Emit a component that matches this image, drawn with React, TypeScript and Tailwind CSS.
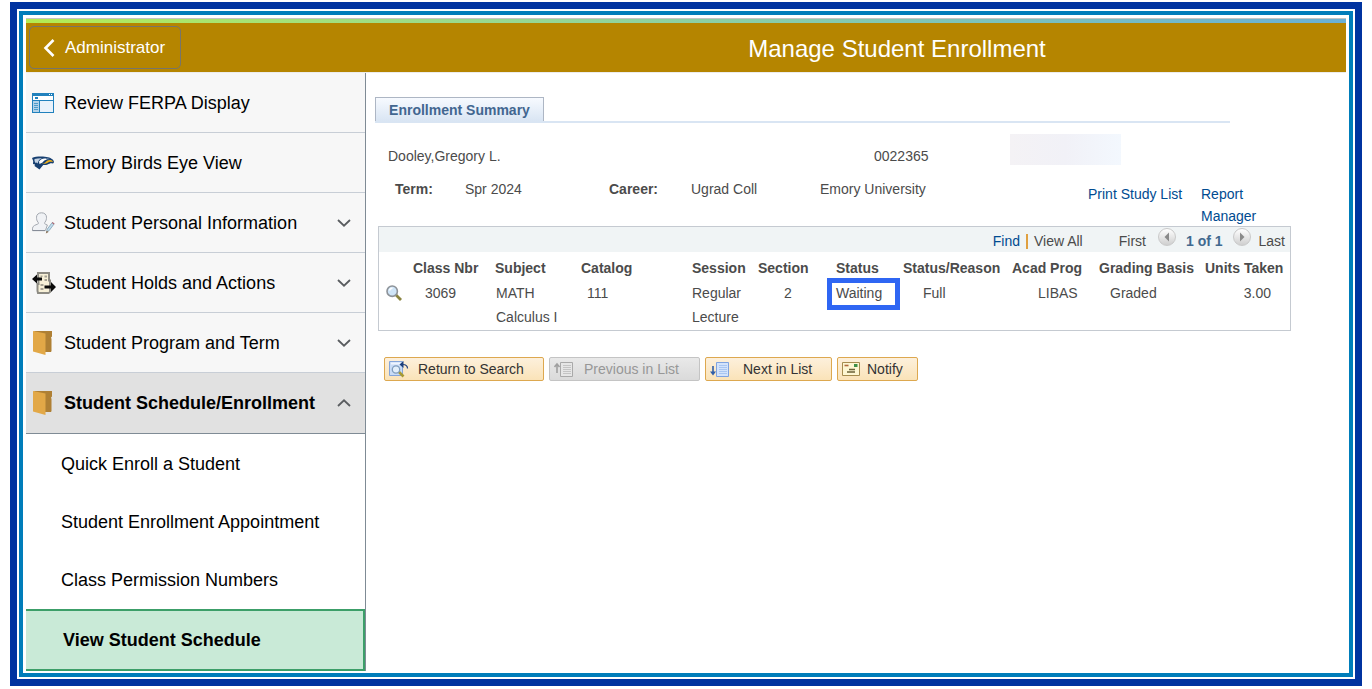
import React from "react";

const ink = "#4b4b4b";

function PageIcon() {
  return (
    <svg width="22" height="20" viewBox="0 0 22 20" shapeRendering="crispEdges" aria-hidden="true">
      <rect width="22" height="20" fill="#2181bd" />
      <rect x="17" y="1" width="1" height="1" fill="#fff" />
      <rect x="19" y="1" width="1" height="1" fill="#fff" />
      <rect x="1" y="3" width="20" height="4" fill="#fff" />
      <rect x="3" y="4" width="3" height="2" fill="#2181bd" />
      <rect x="1" y="8" width="6" height="11" fill="#b3d2e8" />
      <rect x="8" y="8" width="13" height="11" fill="#e9f2fb" />
      <rect x="2" y="10" width="4" height="1" fill="#4d9bcb" />
      <rect x="2" y="12" width="4" height="1" fill="#4d9bcb" />
      <rect x="2" y="14" width="4" height="1" fill="#4d9bcb" />
      <rect x="2" y="16" width="4" height="1" fill="#4d9bcb" />
    </svg>
  );
}

function EagleIcon() {
  return (
    <svg width="22" height="14" viewBox="0 0 22 14" aria-hidden="true">
      <path d="M0 2C3 .6 8 .2 13 .7c4 .3 7.600 1.800 8.700 4.200.5 1.300.1 2.200-1 2.500-2-.6-3.200.2-5 1-1.500.6-3 .6-4.500.5L7.500 13.600 2.500 10 3 8.500 1 8 1.200 5z" fill="#173f70" />
      <path d="M2.500 3c2.500-.7 5-.9 7.500-.8-1.500.5-2.500 1.200-3.200 2.300L5.500 7.500 4.500 6.500 3.500 7 2.500 5z" fill="#c3d2e3" />
      <path d="M7 5.500C8.500 3 11 2.200 14 2.600l1 .9c-2 .3-3.500 1.500-4.500 3L7.500 8z" fill="#fff" />
      <path d="M9.500 7.600c2 .1 3-.4 4-1.400 1.500-1.600 3-2.400 5-2.100 1.500.2 2.300.9 2.300 1.900-2.600-.7-3.800 0-5.600.9-1.800.9-3.700 1.100-5.700.7z" fill="#ecae1b" />
      <path d="M14 2.200c1.500 0 3 .3 4 .9l-2.500.3z" fill="#7f9ab9" />
    </svg>
  );
}

function PersonIcon() {
  return (
    <svg width="23" height="22" viewBox="0 0 23 22" aria-hidden="true">
      <path d="M.5 18.500v-2.300c.2-2.500 3.200-3.300 5-4 1.300-.4 1.100-1.400.4-2.200C4.800 8.700 4.500 7.200 4.500 5.200 4.500 2.600 6.500.8 9.500.8s5 1.800 5 4.400c0 2-.3 3.500-1.400 4.800-.7.800-.8 1.700.3 2.200l2 .8-2 5.500z" fill="#f0f2f5" stroke="#a3a8b0" />
      <path d="M.5 18.600h12.500" stroke="#858b95" />
      <path d="M14.500 20.300l.8-3.200L20.200 10.500l1.900 1.400-4.900 6.600z" fill="#c2dded" stroke="#7e9fb4" strokeWidth=".8" />
      <path d="M13.800 21.500l.9-2.800 1.800 1.300z" fill="#8b6b4b" />
      <path d="M20.200 10.600l2 1.400" stroke="#b06a72" strokeWidth="1.200" />
    </svg>
  );
}

function TransferIcon() {
  return (
    <svg width="24" height="24" viewBox="0 0 24 24" aria-hidden="true">
      <path d="M6 2h11v7.500h1v11.500l-1.500 1H6l-.5-2v-7h1z" fill="#f7f0d7" stroke="#8d8b83" strokeWidth="2" />
      <path d="M12.500 4.500h2.500v2h-2.500zM12.500 8h2.500v2h-2.500zM8.500 13h3v2h-3zM8.500 17h3v2h-3zM8.500 4.500h2v1.500h-2z" fill="#a5a193" />
      <path d="M0 8l5-4.500V6.500h5v3H5v3z" fill="#0a0a0a" />
      <path d="M24 16l-5-5v3.500h-6.500v3H19v3.500z" fill="#0a0a0a" />
    </svg>
  );
}

function FolderIcon() {
  return (
    <svg width="19" height="24" viewBox="0 0 19 24" className="ml-px" aria-hidden="true">
      <path d="M1 0H19v5.500l-1 1 .5 1.500v12l-.5 1H12z" fill="#af8034" />
      <path d="M0 0l12.500 2.500V24L0 20.500z" fill="#e2a847" />
    </svg>
  );
}

function Chevron({ up = false }: { up?: boolean }) {
  return (
    <svg width="14" height="8" viewBox="0 0 14 8" fill="none" stroke="#5a5d60" strokeWidth="1.800" aria-hidden="true">
      <path d={up ? "M1 7l6-5.700L13 7" : "M1 1l6 5.700L13 1"} />
    </svg>
  );
}

function MagnifierIcon() {
  return (
    <svg width="16" height="16" viewBox="0 0 16 16" aria-hidden="true">
      <path d="M9.800 9.800L15 15" stroke="#8a8440" strokeWidth="2.800" />
      <circle cx="6.200" cy="6.200" r="5.200" fill="#cfe5f8" stroke="#8d9298" strokeWidth="1.600" />
      <path d="M3.500 5.500a3 3 0 0 1 3-2.300" stroke="#fff" strokeWidth="1.400" fill="none" />
    </svg>
  );
}

function ReturnIcon() {
  return (
    <svg width="20" height="18" viewBox="0 0 20 18" aria-hidden="true">
      <path d="M.5 1.500h13v14H.500z" fill="#c9dcf6" stroke="#84a5da" />
      <path d="M2 3.500h10" stroke="#eef5ff" strokeWidth="2" />
      <path d="M9.500 11.500l5 5" stroke="#a79a33" strokeWidth="2.600" />
      <circle cx="7" cy="9.500" r="3.700" fill="#e2effb" stroke="#7f9cbd" strokeWidth="1.300" />
      <path d="M18.500 8.500c0-3-1.500-4-5-4" stroke="#27457e" strokeWidth="1.200" strokeDasharray="7 1" fill="none" />
      <path d="M10.500 4.500L14.500 1v7z" fill="#1d3f7c" />
    </svg>
  );
}

function ListIcon({ direction }: { direction: "up" | "down" }) {
  const up = direction === "up";
  const line = up ? "#a9a9a9" : "#7fa3e0";
  return (
    <svg width="19" height="17" viewBox="0 0 19 17" aria-hidden="true">
      <path d="M6.500 1.500h12v14h-12z" fill={up ? "#e6e6e6" : "#d3e3fb"} stroke={line} />
      <path d="M9 4.500h8M9 6.500h8M9 8.500h8M9 10.500h8M9 12.500h8" stroke={up ? "#c4c4c4" : "#a9c6f2"} />
      {up ? (
        <path d="M3 12V3M.5 6L3 3l2.500 3" stroke="#a0a0a0" strokeWidth="1.600" fill="none" />
      ) : (
        <>
          <path d="M3 5v8" stroke="#2f5ea8" strokeWidth="1.600" />
          <path d="M0 10.500h6l-3 4z" fill="#2f5ea8" />
        </>
      )}
    </svg>
  );
}

function MailIcon() {
  return (
    <svg width="18" height="14" viewBox="0 0 18 14" aria-hidden="true">
      <path d="M.5.500h17v13H.500z" fill="#fdf6d2" stroke="#a58b4e" />
      <path d="M2.500 3.500h4" stroke="#b0683d" strokeWidth="1.600" />
      <path d="M12 2h3.500v3H12z" fill="#3f8f46" />
      <path d="M7 7.500h6M5 10h8" stroke="#6b6237" strokeWidth="1.300" />
    </svg>
  );
}

function PagerArrow({ label, back = false }: { label: string; back?: boolean }) {
  return (
    <button type="button" aria-label={label} className="h-[18px] w-[18px] rounded-full border border-[#c9c9c9] bg-linear-to-b from-white to-[#cfcfcf]">
      <svg width="16" height="16" viewBox="0 0 16 16" aria-hidden="true">
        <path d={back ? "M10 3.500v9L5.500 8z" : "M6 3.500v9L10.500 8z"} fill="#8a8a8a" />
      </svg>
    </button>
  );
}

const menu = [
  { label: "Review FERPA Display", icon: <PageIcon /> },
  { label: "Emory Birds Eye View", icon: <EagleIcon /> },
  { label: "Student Personal Information", icon: <PersonIcon />, group: true },
  { label: "Student Holds and Actions", icon: <TransferIcon />, group: true },
  { label: "Student Program and Term", icon: <FolderIcon />, group: true },
];

const submenu = ["Quick Enroll a Student", "Student Enrollment Appointment", "Class Permission Numbers"];

function Sidebar() {
  return (
    <nav aria-label="Student records" className="w-[340px] shrink-0 border-r border-[#7f8b95] text-[18px] leading-[22px] text-black">
      <ul>
        {menu.map((item) => (
          <li key={item.label} className="border-b border-[#c8ced6] bg-[#f7f7f7]">
            <button type="button" className="flex h-[59px] w-full items-center pr-[14px] pl-[6px] text-left">
              <span className="flex w-[32px] shrink-0 items-center">{item.icon}</span>
              <span className="flex-1">{item.label}</span>
              {item.group && <Chevron />}
            </button>
          </li>
        ))}
        <li>
          <button type="button" aria-expanded="true" className="flex h-[61px] w-full items-center border-b border-[#7f8b95] bg-[#e1e1e1] pr-[14px] pl-[6px] text-left font-bold">
            <span className="flex w-[32px] shrink-0 items-center"><FolderIcon /></span>
            <span className="flex-1">Student Schedule/Enrollment</span>
            <Chevron up />
          </button>
          <ul className="pt-px">
            {submenu.map((label) => (
              <li key={label}>
                <a href="#" className="flex h-[58px] items-center pl-[35px]">{label}</a>
              </li>
            ))}
            <li>
              <a href="#" aria-current="page" className="flex h-[62px] items-center border-y-2 border-r-2 border-[#3c9f69] bg-[#c9ead7] pl-[37px] font-bold">
                View Student Schedule
              </a>
            </li>
          </ul>
        </li>
      </ul>
    </nav>
  );
}

function ClassTable() {
  return (
    <section className="border border-[#c5cad1]">
      <div className="flex h-[25px] items-start justify-end bg-[#f0f4f5] pr-[5px] leading-[28px]">
        <a href="#" className="text-[#004b91]">Find</a>
        <span className="mx-[6px] mt-[7px] h-[15px] w-[2px] bg-[#e0a040]" />
        <span className="mr-[36px]">View All</span>
        <span className="mr-[12px]">First</span>
        <span className="mt-px mr-[10px] flex"><PagerArrow label="Previous" back /></span>
        <span className="mr-[10px] font-bold text-[#41698f]">1 of 1</span>
        <span className="mt-px mr-[8px] flex"><PagerArrow label="Next" /></span>
        <span>Last</span>
      </div>
      <table className="w-full table-fixed text-left leading-[24px]">
        <colgroup>
          <col className="w-[30px]" />
          <col className="w-[82px]" />
          <col className="w-[86px]" />
          <col className="w-[111px]" />
          <col className="w-[66px]" />
          <col className="w-[78px]" />
          <col className="w-[67px]" />
          <col className="w-[109px]" />
          <col className="w-[87px]" />
          <col className="w-[106px]" />
          <col className="w-[89px]" />
        </colgroup>
        <thead>
          <tr className="h-[28px] whitespace-nowrap align-bottom">
            <td />
            <th className="pl-[4px]">Class Nbr</th>
            <th className="pl-[4px]">Subject</th>
            <th className="pl-[4px]">Catalog</th>
            <th className="pl-[4px]">Session</th>
            <th className="pl-[4px]">Section</th>
            <th className="pl-[4px]">Status</th>
            <th className="pl-[4px]">Status/Reason</th>
            <th className="pl-[4px]">Acad Prog</th>
            <th className="pl-[4px]">Grading Basis</th>
            <th className="pl-[4px]">Units Taken</th>
          </tr>
        </thead>
        <tbody>
          <tr className="h-[50px] align-top">
            <td className="pt-[5px] pl-[7px]">
              <button type="button" aria-label="Class details" className="block"><MagnifierIcon /></button>
            </td>
            <td className="pt-px pl-[16px]">3069</td>
            <td className="pt-px pl-[5px]">MATH<br />Calculus I</td>
            <td className="pt-px pl-[10px]">111</td>
            <td className="pt-px pl-[4px]">Regular<br />Lecture</td>
            <td className="pt-px pl-[30px]">2</td>
            <td className="relative pt-px pl-[4px]">
              Waiting
              <span className="absolute -top-[2px] -left-[5px] h-[32px] w-[73px] border-[5px] border-[#2f66f3]" />
            </td>
            <td className="pt-px pl-[24px]">Full</td>
            <td className="pt-px pl-[30px]">LIBAS</td>
            <td className="pt-px pl-[15px]">Graded</td>
            <td className="pt-px pr-[19px] text-right">3.00</td>
          </tr>
        </tbody>
      </table>
    </section>
  );
}

const gold = "flex h-[24px] items-center rounded-[2px] border border-[#dda84f] bg-linear-to-b from-[#fdf0dc] to-[#fae3b8] pl-[4px] text-[#333333]";

export default function App() {
  return (
    <div className="bg-white px-[10px] pt-[2px] pb-[3px] font-['Liberation_Sans',Arial,sans-serif]">
      <div className="border-7 border-[#0033a0] p-[2px]">
        <div className="border-4 border-[#007dba] px-[3px] pt-[3px] pb-[2px]">
          <header>
            <div className="h-[5px] border-t border-[#c4c4c4] bg-linear-to-r from-[#b4ec51] to-[#6ab0d4]" />
            <div className="flex h-[49px] items-center bg-[#b58500] pl-[3px] text-white">
              <button type="button" className="flex h-[43px] w-[152px] items-center gap-[10px] rounded-[5px] border border-[#77756a] pt-px pl-[13px] text-[17px]">
                <svg width="12" height="18" viewBox="0 0 12 18" fill="none" stroke="#fff" strokeWidth="2.600" aria-hidden="true">
                  <path d="M10.500 1L2.500 9l8 8" />
                </svg>
                Administrator
              </button>
              <h1 className="flex-1 pt-[2px] pl-[267px] text-center text-[24px] leading-[28px]">Manage Student Enrollment</h1>
            </div>
            <div className="h-px bg-[#ececec]" />
          </header>

          <div className="flex">
            <Sidebar />
            <main className="min-w-0 flex-1 pt-[24px] pr-[55px] pl-[9px] text-[14px] leading-[18px]" style={{ color: ink }}>
              <div className="mr-[61px] flex border-b-2 border-[#d9e5f3]">
                <h2 className="flex h-[24px] w-[169px] items-center justify-center border-x border-t border-[#adb6c4] bg-linear-to-b from-[#f7faff] to-[#d9e5f3] pt-px font-bold text-[#426690]">
                  Enrollment Summary
                </h2>
              </div>

              <div className="mt-[11px] grid h-[31px] grid-cols-[486px_136px_111px] items-end pl-[13px]">
                <span>Dooley,Gregory L.</span>
                <span>0022365</span>
                <span className="h-full bg-linear-to-r from-[#f4f2f5] via-[#f1f1f7] to-[#f3f8fe]" />
              </div>

              <div className="mt-[15px] grid h-[46px] grid-cols-[70px_144px_82px_129px_268px_113px_60px] pl-[20px]">
                <span className="font-bold">Term:</span>
                <span>Spr 2024</span>
                <span className="font-bold">Career:</span>
                <span>Ugrad Coll</span>
                <span>Emory University</span>
                <a href="#" className="pt-[3px] leading-[22px] text-[#004b91]">Print Study List</a>
                <a href="#" className="pt-[3px] leading-[22px] text-[#004b91]">Report Manager</a>
              </div>

              <div className="pl-[3px]">
                <ClassTable />
                <div className="mt-[26px] flex gap-[5px] pl-[6px]">
                  <button type="button" className={`${gold} w-[160px] gap-[9px]`}><ReturnIcon />Return to Search</button>
                  <button type="button" disabled className="flex h-[24px] w-[151px] items-center gap-[11px] rounded-[2px] border border-[#c4c4c4] bg-linear-to-b from-[#e9e9e9] to-[#dadada] pl-[4px] text-[#979797]">
                    <ListIcon direction="up" />Previous in List
                  </button>
                  <button type="button" className={`${gold} w-[127px] gap-[14px]`}><ListIcon direction="down" />Next in List</button>
                  <button type="button" className={`${gold} w-[81px] gap-[7px]`}><MailIcon />Notify</button>
                </div>
              </div>
            </main>
          </div>
        </div>
      </div>
    </div>
  );
}
